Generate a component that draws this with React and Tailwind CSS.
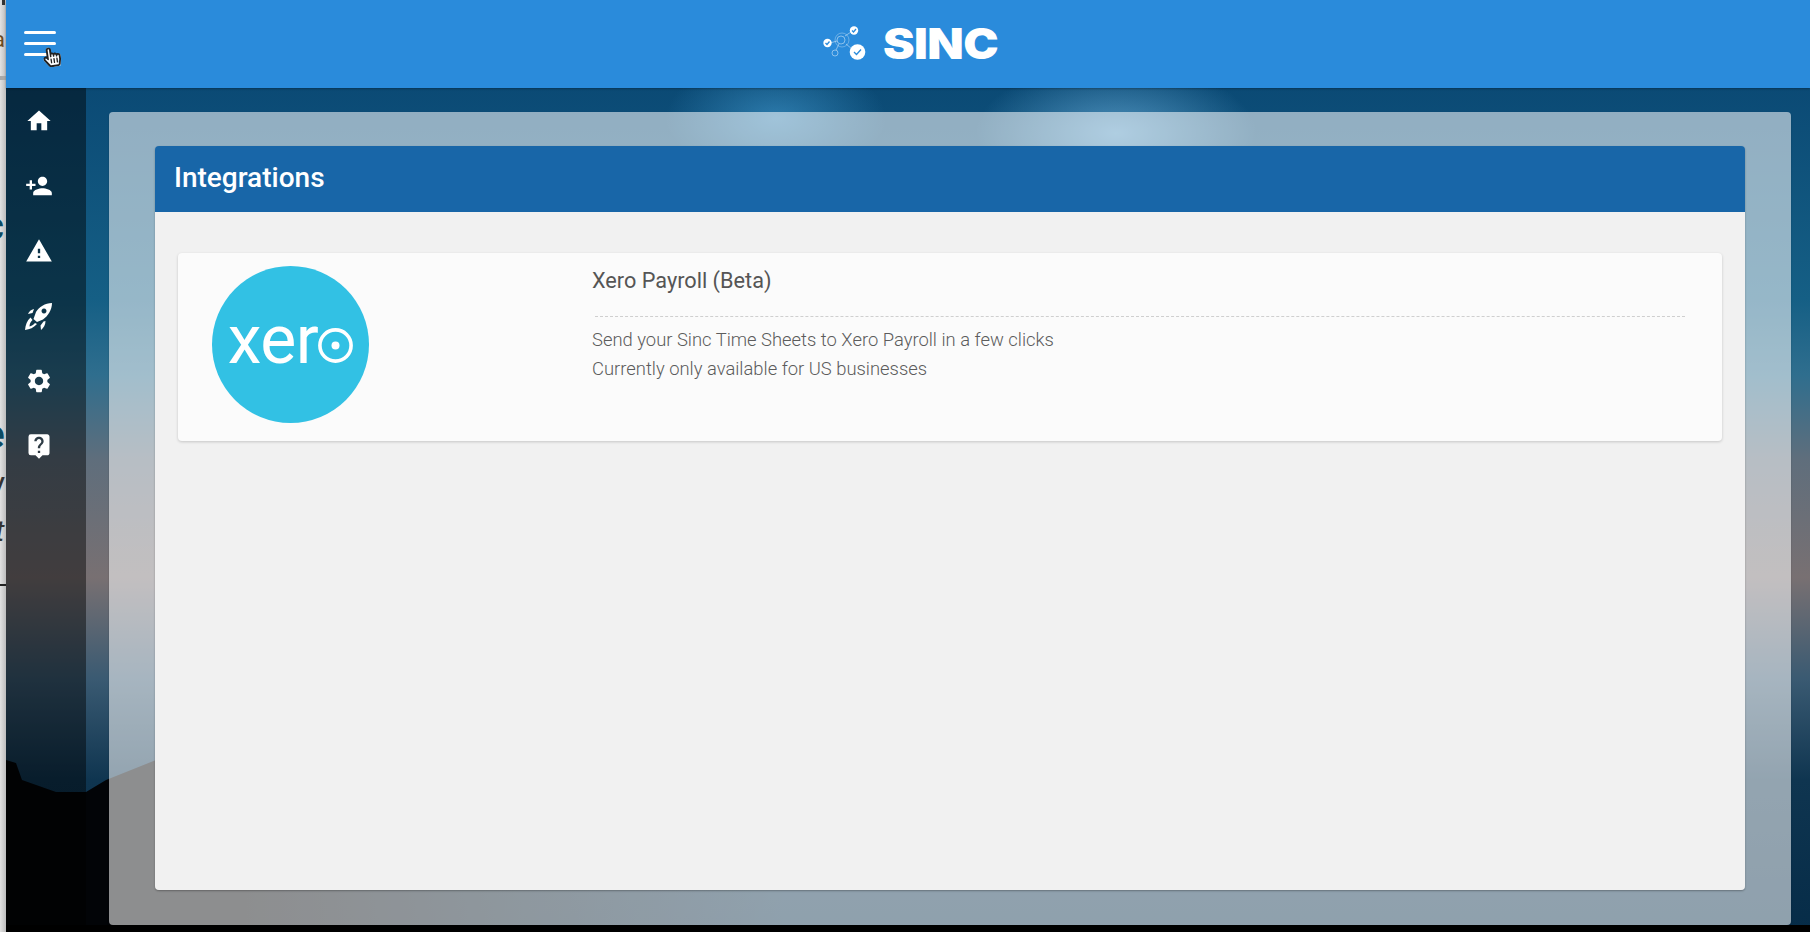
import { FaHandPointer, FaRegHandPointer } from 'react-icons/fa';
import { MdHome, MdLiveHelp, MdPersonAdd, MdSettings, MdWarning } from 'react-icons/md';

const RocketIcon = ({ className }) => (
  <svg viewBox="0 0 28 28" fill="currentColor" className={className}>
    <path
      fillRule="evenodd"
      d="M27 1 C20 1 14 5 11 10 L8.5 17 L12 20 L18 17.5 C23 14 27 8 27 1 Z M19 6.5 a2.5 2.5 0 1 0 0.01 0 Z"
    />
    <path d="M9 7 C6 7.5 4 9.5 3 12 L7.5 11 Z" />
    <path d="M18.5 19.5 L15.5 23.5 L16 28 C18.5 26 20.5 23 20.5 19 Z" />
    <path d="M5.5 15.5 C2 18.5 0.5 23 0 28 C4.5 27.5 9 25.5 12 22 L10 21 C8.5 23 6.5 24 4.5 24.5 C4.5 22 5.5 20 7.5 18 Z" />
  </svg>
);

const navIcons = [MdHome, MdPersonAdd, MdWarning, RocketIcon, MdSettings, MdLiveHelp];

const SincMark = () => (
  <svg width="46" height="36" viewBox="0 0 46 36" className="shrink-0">
    <g fill="none" stroke="#fff" strokeOpacity="0.45" strokeWidth="1">
      <path d="M7 17 L14 15 M22 10 L28 6 M23 18 L29 23 M16 18 L13 24" />
      <circle cx="18" cy="14" r="4" />
      <circle cx="19" cy="14" r="7" strokeOpacity="0.3" />
      <circle cx="12" cy="27" r="3" />
    </g>
    <circle cx="31" cy="4.5" r="4.2" fill="#fff" />
    <circle cx="4.5" cy="17" r="4.2" fill="#fff" />
    <circle cx="34.5" cy="26" r="7.8" fill="#fff" />
    <g fill="none" stroke="#2a8bdb" strokeWidth="1.3">
      <path d="M29 4.5 l1.5 1.5 l2.5 -3" />
      <path d="M2.5 17 l1.5 1.5 l2.5 -3" />
      <path d="M31 26 l2.5 2.5 l4.5 -5" />
    </g>
  </svg>
);

const XeroBadge = () => (
  <div className="flex h-[157px] w-[157px] shrink-0 items-center justify-center rounded-full bg-[#32c1e4] pt-[2px] text-white">
    <span className="mt-[-12px] font-['Roboto',sans-serif] text-[68px] leading-none font-normal tracking-[-0.5px]">xer</span>
    <svg width="35" height="35" viewBox="0 0 35 35" className="shrink-0">
      <circle cx="17.5" cy="17.5" r="15.6" fill="none" stroke="#fff" strokeWidth="3.6" />
      <circle cx="17.5" cy="17.5" r="4" fill="#fff" />
    </svg>
  </div>
);

export default function App() {
  return (
    <div className="flex h-screen w-screen overflow-hidden bg-[#d4d4d4] font-['Roboto',sans-serif]">
      <div className="relative w-[6px] shrink-0 overflow-hidden bg-[linear-gradient(90deg,#e2e2e2,#bdbdbd)]">
        <div className="absolute left-[2px] top-0 h-[5px] w-[3px] bg-[#333]" />
        <span className="absolute left-[-7px] top-[29px] text-[22px] leading-none text-[#6b4a22]">a</span>
        <div className="absolute left-0 top-[76px] h-[4px] w-full bg-[#a8a8a8]" />
        <span className="absolute left-[-17px] top-[207px] text-[40px] leading-none font-bold text-[#0c4a63]">c</span>
        <span className="absolute left-[-17px] top-[415px] text-[40px] leading-none font-bold text-[#0c4a63]">e</span>
        <span className="absolute left-[-14px] top-[473px] text-[30px] leading-none text-[#333]">V</span>
        <span className="absolute left-[-5px] top-[516px] text-[30px] leading-none italic text-[#333]">t</span>
        <div className="absolute left-0 top-[584px] h-[2px] w-full bg-[#222]" />
      </div>

      <div className="relative flex min-w-0 flex-1 flex-col">
        <header className="relative z-10 flex h-[88px] shrink-0 items-center justify-center bg-[#2a8bdb] shadow-[0_1px_2px_rgba(0,0,0,0.3)]">
          <button className="absolute left-[18px] top-[31px] flex w-[32px] flex-col gap-[8px]">
            <span className="h-[3px] w-full rounded-sm bg-white" />
            <span className="h-[3px] w-full rounded-sm bg-white" />
            <span className="h-[3px] w-full rounded-sm bg-white" />
          </button>
          <div className="absolute left-[37px] top-[47px] h-[20px] w-[18px] rotate-[-8deg]">
            <FaHandPointer className="absolute inset-0 h-full w-full text-white" />
            <FaRegHandPointer className="absolute inset-0 h-full w-full text-[#222]" />
          </div>
          <div className="ml-[3px] flex items-center gap-[14px]">
            <SincMark />
            <span className="inline-block w-[113px] origin-left scale-x-[1.13] font-['Inter',sans-serif] text-[42px] leading-none font-black tracking-[-0.5px] text-white">SINC</span>
          </div>
        </header>

        <div className="relative flex min-h-0 flex-1 bg-[radial-gradient(ellipse_140px_70px_at_1110px_45px,rgba(120,190,235,0.6),transparent),radial-gradient(ellipse_110px_60px_at_770px_30px,rgba(70,160,215,0.55),transparent),linear-gradient(180deg,#0b4a75_0%,#155f85_25%,#2f6e8e_34%,#5f6e7c_44%,#787072_58%,#3a5a72_70%,#0f3550_82%,#062c48_100%)]">
          <svg className="absolute inset-0 h-full w-full" viewBox="0 0 1804 844" preserveAspectRatio="none">
            <defs>
              <linearGradient id="ridgeFade" x1="0" x2="1" y1="0" y2="0">
                <stop offset="0" stopColor="#020407" />
                <stop offset="0.2" stopColor="#020407" />
                <stop offset="0.65" stopColor="#020407" stopOpacity="0" />
              </linearGradient>
            </defs>
            <path d="M0 672 L10 675 L16 692 L50 704 L80 704 L100 692 L130 680 L180 660 L300 670 L600 730 L1000 800 L1200 844 L0 844 Z" fill="url(#ridgeFade)" />
          </svg>
          <div className="absolute bottom-0 left-0 h-[7px] w-full bg-black" />

          <nav className="relative flex w-[80px] shrink-0 flex-col items-center gap-[37px] bg-black/45 pt-[19px] pr-[14px] text-white">
            {navIcons.map((Icon, i) => (
              <Icon key={i} className="h-[28px] w-[28px] shrink-0" />
            ))}
          </nav>

          <main className="relative flex min-w-0 flex-1 pl-[23px] pr-[19px] pt-[24px] pb-[7px]">
            <section className="flex min-w-0 flex-1 rounded-[4px] bg-white/55 px-[46px] pt-[34px] pb-[35px] shadow-[0_1px_2px_rgba(0,0,0,0.2)]">
              <div className="flex min-w-0 flex-1 flex-col overflow-hidden rounded-[4px] shadow-[0_1px_2px_rgba(0,0,0,0.3)]">
                <div className="flex h-[66px] shrink-0 items-center bg-[#1866a8] pb-[2px] pl-[19px]">
                  <h1 className="text-[28px] font-medium text-white">Integrations</h1>
                </div>
                <div className="flex-1 bg-[#f1f1f1] px-[23px] pt-[41px]">
                  <article className="flex h-[188px] rounded-[4px] bg-[#fbfbfb] pl-[34px] pr-[37px] pt-[13px] shadow-[0_1px_3px_rgba(0,0,0,0.18)]">
                    <XeroBadge />
                    <div className="ml-[223px] min-w-0 flex-1">
                      <h2 className="text-[21.7px] leading-[29px] text-[#555]">Xero Payroll (Beta)</h2>
                      <div className="ml-[3px] mt-[21px] border-t border-dashed border-[#cfcfcf]" />
                      <p className="mt-[8px] text-[18.4px] leading-[29px] font-light text-[#5c5c5c]">
                        Send your Sinc Time Sheets to Xero Payroll in a few clicks
                        <br />
                        Currently only available for US businesses
                      </p>
                    </div>
                  </article>
                </div>
              </div>
            </section>
          </main>
        </div>
      </div>
    </div>
  );
}
